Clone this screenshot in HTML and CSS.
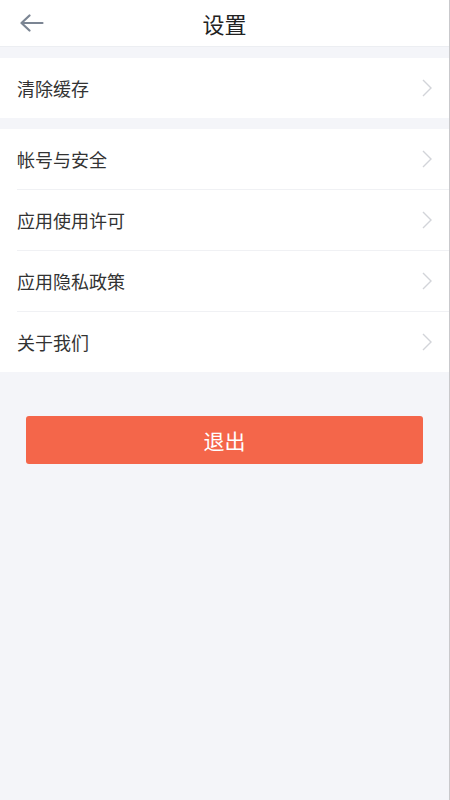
FILE: index.html
```html
<!DOCTYPE html>
<html lang="zh-CN">
<head>
<meta charset="utf-8">
<title>设置</title>
<link rel="stylesheet" href="styles.css">
</head>
<body>
<div class="page">
  <header class="topbar">
    <span class="back">
      <svg width="24" height="18" viewBox="0 0 24 18"><path d="M1.5 9 H22.5 M9.5 1.5 L1.5 9 L9.5 16.5" fill="none" stroke="#7b8593" stroke-width="2.2" stroke-linecap="round" stroke-linejoin="round"/></svg>
    </span>
    <h1 class="title">设置</h1>
  </header>
  <section class="group">
    <div class="row"><span class="label">清除缓存</span><span class="chev"><svg width="10" height="18" viewBox="0 0 10 18"><path d="M1 1 L9 9 L1 17" fill="none" stroke="#d2d4d9" stroke-width="1.4"/></svg></span></div>
  </section>
  <section class="group">
    <div class="row"><span class="label">帐号与安全</span><span class="chev"><svg width="10" height="18" viewBox="0 0 10 18"><path d="M1 1 L9 9 L1 17" fill="none" stroke="#d2d4d9" stroke-width="1.4"/></svg></span></div>
    <div class="row"><span class="label">应用使用许可</span><span class="chev"><svg width="10" height="18" viewBox="0 0 10 18"><path d="M1 1 L9 9 L1 17" fill="none" stroke="#d2d4d9" stroke-width="1.4"/></svg></span></div>
    <div class="row"><span class="label">应用隐私政策</span><span class="chev"><svg width="10" height="18" viewBox="0 0 10 18"><path d="M1 1 L9 9 L1 17" fill="none" stroke="#d2d4d9" stroke-width="1.4"/></svg></span></div>
    <div class="row"><span class="label">关于我们</span><span class="chev"><svg width="10" height="18" viewBox="0 0 10 18"><path d="M1 1 L9 9 L1 17" fill="none" stroke="#d2d4d9" stroke-width="1.4"/></svg></span></div>
  </section>
  <div class="actions">
    <button class="logout">退出</button>
  </div>
</div>
</body>
</html>
```
FILE: styles.css
```css
html, body {
  margin: 0;
  padding: 0;
}
body {
  font-family: "Noto Sans CJK SC", "Noto Sans", sans-serif;
  background: #f4f5f9;
}
.page {
  min-height: 800px;
  box-sizing: border-box;
  border-right: 1px solid #c9c9cc;
  background: #f4f5f9;
}
.topbar {
  height: 46px;
  background: #fff;
  border-bottom: 1px solid #eceef2;
  display: flex;
  align-items: center;
  justify-content: center;
  position: relative;
}
.back {
  position: absolute;
  left: 20px;
  top: 14px;
  display: flex;
}
.title {
  margin: 0;
  font-size: 22px;
  font-weight: 400;
  color: #222;
  line-height: 46px;
}
.group {
  background: #fff;
  margin-top: 11px;
}
.row {
  height: 60px;
  margin-left: 17px;
  padding-right: 17px;
  display: flex;
  align-items: center;
  justify-content: space-between;
  border-top: 1px solid #f0f1f4;
}
.row:first-child {
  border-top: none;
}
.label {
  font-size: 18px;
  color: #333;
}
.chev {
  display: flex;
}
.actions {
  padding: 44px 26px 0 26px;
}
.logout {
  display: block;
  width: 100%;
  height: 48px;
  border: none;
  border-radius: 3px;
  background: #f4664a;
  color: #fff;
  font-family: "Noto Sans CJK SC", "Noto Sans", sans-serif;
  font-size: 21px;
}
```
